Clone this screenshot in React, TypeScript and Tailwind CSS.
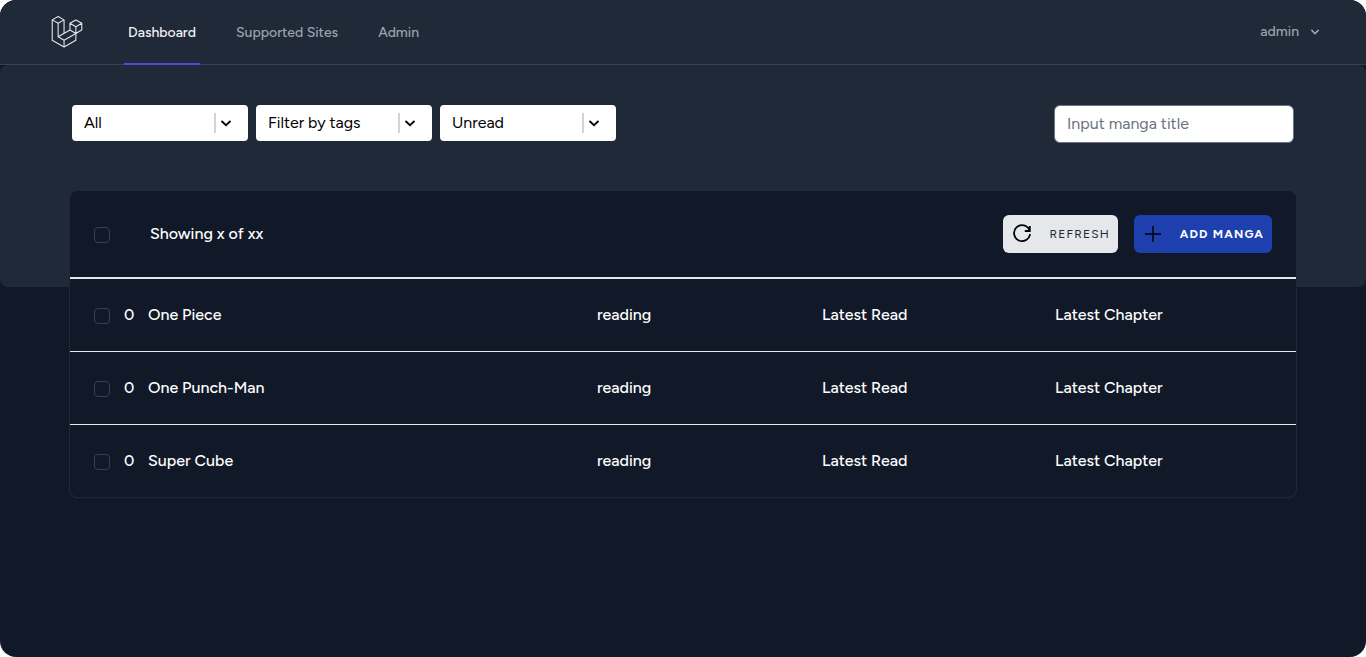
import React from "react";

type Manga = { title: string; unread: number; status: string };

const mangas: Manga[] = [
  { title: "One Piece", unread: 0, status: "reading" },
  { title: "One Punch-Man", unread: 0, status: "reading" },
  { title: "Super Cube", unread: 0, status: "reading" },
];

const checkboxClass =
  "mt-0.5 block size-4 appearance-none rounded border border-[#374151] bg-[#111827] checked:bg-[#4f46e5]";

function Logo() {
  return (
    <svg
      viewBox="0 0 62 65"
      className="h-8 w-8"
      fill="none"
      stroke="#e5e7eb"
      strokeWidth="2.2"
      strokeLinejoin="round"
      aria-hidden="true"
    >
      <path d="M1 7.9 13 1l12 6.9-12 6.9L1 7.9v41.3L25 63l24-13.8V35.5" />
      <path d="M13 14.8v27.4l12 6.9V63M25 7.9v27.4M13 42.2l24-13.7M25 49.1l24-13.6" />
      <path d="m37 14.9 12-6.9 12 6.9-12 6.9-12-6.9v13.6l12 7 12-7V14.9M49 21.8v13.7" />
    </svg>
  );
}

function NavLink({ label, active = false }: { label: string; active?: boolean }) {
  return (
    <a
      href="#"
      aria-current={active ? "page" : undefined}
      className={
        active
          ? "flex items-center border-b-2 border-[#4f46e5] px-1 pt-0.5 text-[#f3f4f6]"
          : "flex items-center border-b-2 border-transparent px-1 pt-0.5 text-[#9ca3af]"
      }
    >
      {label}
    </a>
  );
}

function Filter({ label, options }: { label: string; options: string[] }) {
  return (
    <div className="relative w-44">
      <select
        aria-label={label}
        className="h-9 w-full appearance-none rounded bg-white pr-9 pl-3 text-black"
      >
        {options.map((option) => (
          <option key={option}>{option}</option>
        ))}
      </select>
      <span className="pointer-events-none absolute inset-y-2 right-3 flex w-[22px] items-center border-l-2 border-[#d1d5db] pl-0.5">
        <svg
          viewBox="0 0 16 16"
          className="size-4"
          fill="none"
          stroke="#000"
          strokeWidth="1.8"
          aria-hidden="true"
        >
          <path d="m3.5 6 4.5 4.2L12.500 6" />
        </svg>
      </span>
    </div>
  );
}

export default function App() {
  return (
    <div className="min-h-screen overflow-hidden rounded-2xl bg-[#111827] font-['Figtree','Lato',sans-serif] text-base text-white">
      <nav className="flex h-[65px] justify-between border-b border-[#374151] bg-[#1f2937] pr-[43px] pl-[51px] text-sm font-medium">
        <div className="-mb-px flex gap-8">
          <a href="#" aria-label="Home" className="mr-[9px] flex items-center pb-0.5">
            <Logo />
          </a>
          <NavLink label="Dashboard" active />
          <NavLink label="Supported Sites" />
          <NavLink label="Admin" />
        </div>
        <button type="button" className="flex items-center gap-2 text-[#9ca3af]">
          admin
          <svg viewBox="0 0 20 20" className="size-4" fill="currentColor" aria-hidden="true">
            <path
              fillRule="evenodd"
              clipRule="evenodd"
              d="M5.293 7.293a1 1 0 011.414 0L10 10.586l3.293-3.293a1 1 0 111.414 1.414l-4 4a1 1 0 01-1.414 0l-4-4a1 1 0 010-1.414z"
            />
          </svg>
        </button>
      </nav>

      <section className="flex items-start justify-between rounded-lg bg-[#1f2937] px-[72px] pt-10 pb-36">
        <div className="flex gap-2">
          <Filter label="Status" options={["All", "Reading", "Completed"]} />
          <Filter label="Tags" options={["Filter by tags"]} />
          <Filter label="Read state" options={["Unread", "Read"]} />
        </div>
        <input
          type="text"
          aria-label="Manga title"
          placeholder="Input manga title"
          className="h-[38px] w-60 rounded-md border border-[#6b7280] bg-white px-3 pb-0.5 text-black placeholder:text-[#6b7280] placeholder:opacity-100"
        />
      </section>

      <main className="-mt-24 px-[70px] pb-10">
        <div className="overflow-hidden rounded-lg bg-[#111827] shadow-[0_0_0_1px_#1f2937,0_1px_1px_#374151]">
          <header className="flex h-22 items-center border-b-2 border-[#e5e7eb] px-6">
            <input type="checkbox" aria-label="Select all manga" className={checkboxClass} />
            <p className="ml-10 grow font-medium">Showing x of xx</p>
            <div className="flex gap-4 text-xs tracking-widest">
              <button
                type="button"
                className="flex h-[38px] w-[115px] items-center justify-between rounded-md bg-[#e5e7eb] px-2 text-[#1f2937] uppercase"
              >
                <svg
                  viewBox="0 0 22 22"
                  className="size-[22px]"
                  fill="none"
                  stroke="#000"
                  strokeWidth="1.8"
                  aria-hidden="true"
                >
                  <path d="M18.500 7.200A8 8 0 1 0 19 11M18.800 3v5h-5" />
                </svg>
                Refresh
              </button>
              <button
                type="button"
                className="flex h-[38px] w-[138px] items-center justify-between rounded-md bg-[#1e40af] px-2 font-bold text-white uppercase"
              >
                <svg
                  viewBox="0 0 22 22"
                  className="size-[22px]"
                  fill="none"
                  stroke="#000"
                  strokeWidth="1.5"
                  aria-hidden="true"
                >
                  <path d="M11 3v16M3 11h16" />
                </svg>
                Add Manga
              </button>
            </div>
          </header>
          <table className="w-full table-fixed border-separate border-spacing-0 font-medium">
            <colgroup>
              <col className="w-[54px]" />
              <col className="w-6" />
              <col />
              <col className="w-[225px]" />
              <col className="w-[233px]" />
              <col className="w-[241px]" />
            </colgroup>
            <tbody className="[&_tr+tr>td]:border-t [&_tr+tr>td]:border-[#e5e7eb]">
              {mangas.map((manga) => (
                <tr key={manga.title} className="h-[73px] first:h-[72px]">
                  <td className="pl-6">
                    <input
                      type="checkbox"
                      aria-label={`Select ${manga.title}`}
                      className={checkboxClass}
                    />
                  </td>
                  <td>{manga.unread}</td>
                  <td>{manga.title}</td>
                  <td>{manga.status}</td>
                  <td>Latest Read</td>
                  <td>Latest Chapter</td>
                </tr>
              ))}
            </tbody>
          </table>
        </div>
      </main>
    </div>
  );
}
